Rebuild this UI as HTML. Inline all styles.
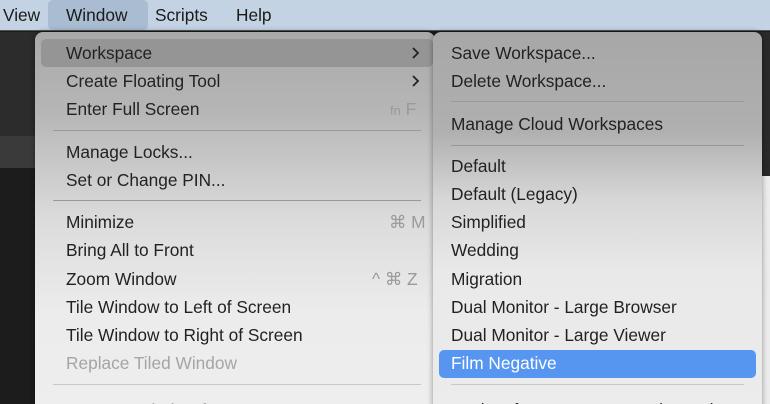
<!DOCTYPE html>
<html><head><style>
*{margin:0;padding:0;box-sizing:border-box}
html,body{width:770px;height:404px;overflow:hidden}
body{position:relative;background:#1c1c1c;font-family:"Liberation Sans",sans-serif;font-size:17.3px;color:#222}
.bar{position:absolute;left:0;top:0;width:770px;height:31px;background:#c3d3e4;border-bottom:1px solid #555}
.bar span{position:absolute;top:5px;font-size:17.3px;color:#1b1b1b}
.winhl{position:absolute;left:48px;top:0;width:100px;height:30px;background:#a9bcd2;border-radius:5px}
.lt{position:absolute;left:0;top:32px;width:40px;height:104px;background:#2c2c2c}
.lt2{position:absolute;left:0;top:136px;width:40px;height:32px;background:#3a3a3a}
.rt{position:absolute;left:755px;top:32px;width:15px;height:144px;background:#2a2a2a}
.rt2{position:absolute;left:755px;top:176px;width:15px;height:228px;background:#ececec}
.m{position:absolute;left:35px;top:32px;width:400px;height:390px;background:linear-gradient(#a9a9a9 0px,#b6b6b6 80px,#dcdcdc 190px,#ececec 280px,#eeeeee);border-radius:8px;box-shadow:0 0 6px rgba(0,0,0,.4)}
.s{position:absolute;left:433px;top:32px;width:329px;height:390px;background:linear-gradient(#a8a7a7 0px,#b0b0b0 100px,#d8d8d8 170px,#e9e9e9 240px,#ececec);border-radius:8px;box-shadow:0 0 6px rgba(0,0,0,.4)}
.i{position:absolute;white-space:nowrap;line-height:20px}
.sep{position:absolute;height:1px;background:#999}
.k{position:absolute;color:#9a9a9a;line-height:20px}
.ch{position:absolute;left:376px;width:9px;height:12px}
</style></head><body>
<div class="bar"><div class="winhl"></div>
<span style="left:3px">View</span><span style="left:66px">Window</span><span style="left:155px">Scripts</span><span style="left:236px">Help</span></div>
<div class="lt"></div><div class="lt2"></div><div class="rt"></div><div class="rt2"></div>
<div class="m">
<div style="position:absolute;left:6px;top:7px;width:392px;height:28px;background:#959595;border-radius:5px"></div>
<div class="i" style="left:31px;top:11px">Workspace</div>
<svg class="ch" style="top:15px" viewBox="0 0 9 12"><path d="M2 1l5 5-5 5" fill="none" stroke="#222" stroke-width="1.8"/></svg>
<div class="i" style="left:31px;top:39px">Create Floating Tool</div>
<svg class="ch" style="top:43px" viewBox="0 0 9 12"><path d="M2 1l5 5-5 5" fill="none" stroke="#222" stroke-width="1.8"/></svg>
<div class="i" style="left:31px;top:67px">Enter Full Screen</div><div class="k" style="left:355px;top:67px"><small style="font-size:13px">fn</small> F</div>
<div class="sep" style="left:18px;width:368px;top:98px"></div>
<div class="i" style="left:31px;top:110px">Manage Locks...</div>
<div class="i" style="left:31px;top:138px">Set or Change PIN...</div>
<div class="sep" style="left:18px;width:368px;top:168px"></div>
<div class="i" style="left:31px;top:180px">Minimize</div><div class="k" style="left:354px;top:180px">⌘ M</div>
<div class="i" style="left:31px;top:208px">Bring All to Front</div>
<div class="i" style="left:31px;top:237px">Zoom Window</div><div class="k" style="left:337px;top:237px">^ ⌘ Z</div>
<div class="i" style="left:31px;top:265px">Tile Window to Left of Screen</div>
<div class="i" style="left:31px;top:293px">Tile Window to Right of Screen</div>
<div class="i" style="left:31px;top:321px;color:#a5a5a5">Replace Tiled Window</div>
<div class="sep" style="left:18px;width:368px;top:352px;background:#c8c8c8"></div>
<div class="i" style="left:31px;top:368px;color:#a5a5a5">Remove Window from Set</div>
</div>
<div class="s">
<div class="i" style="left:18px;top:11px">Save Workspace...</div>
<div class="i" style="left:18px;top:39px">Delete Workspace...</div>
<div class="sep" style="left:18px;width:293px;top:69px"></div>
<div class="i" style="left:18px;top:82px">Manage Cloud Workspaces</div>
<div class="sep" style="left:18px;width:293px;top:113px"></div>
<div class="i" style="left:18px;top:124px">Default</div>
<div class="i" style="left:18px;top:152px">Default (Legacy)</div>
<div class="i" style="left:18px;top:180px">Simplified</div>
<div class="i" style="left:18px;top:208px">Wedding</div>
<div class="i" style="left:18px;top:237px">Migration</div>
<div class="i" style="left:18px;top:265px">Dual Monitor - Large Browser</div>
<div class="i" style="left:18px;top:293px">Dual Monitor - Large Viewer</div>
<div style="position:absolute;left:6px;top:318px;width:317px;height:28px;background:#5796f0;border-radius:5px"></div>
<div class="i" style="left:18px;top:321px;color:#fff">Film Negative</div>
<div class="sep" style="left:18px;width:293px;top:352px;background:#c8c8c8"></div>
<div class="i" style="left:18px;top:368px">Backup from Capture One (16.2.0)</div>
</div>
</body></html>
